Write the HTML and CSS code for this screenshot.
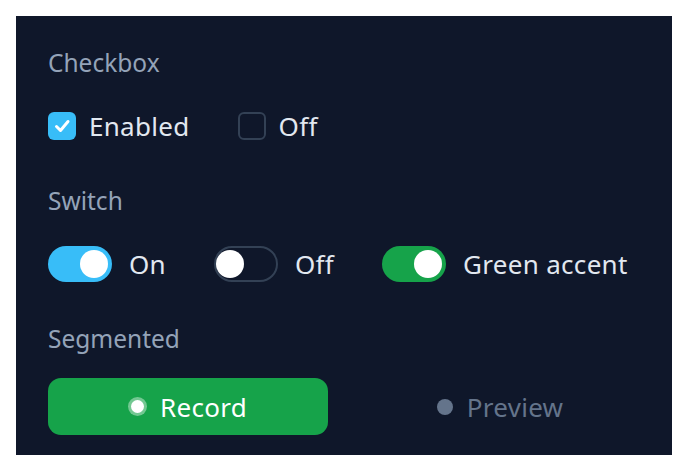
FILE: index.html
```html
<!DOCTYPE html>
<html lang="en">
<head>
    <meta charset="UTF-8">
    <meta name="viewport" content="width=device-width, initial-scale=1.0">
    <title>Controls</title>
    <link rel="stylesheet" href="styles.css">
</head>
<body>
    <div class="panel">
        <div class="section">
            <div class="section-title">Checkbox</div>
            <div class="row">
                <label class="item">
                    <span class="checkbox checked">
                        <svg viewBox="0 0 28 28" width="28" height="28">
                            <path d="M8.5 14.5 L12.5 18.5 L20 9.5" fill="none" stroke="#fff" stroke-width="3" stroke-linecap="round" stroke-linejoin="round"/>
                        </svg>
                    </span>
                    <span class="item-text">Enabled</span>
                </label>
                <label class="item">
                    <span class="checkbox"></span>
                    <span class="item-text">Off</span>
                </label>
            </div>
        </div>

        <div class="section">
            <div class="section-title">Switch</div>
            <div class="row">
                <label class="item switch-item">
                    <span class="switch on"><span class="knob"></span></span>
                    <span class="item-text">On</span>
                </label>
                <label class="item switch-item">
                    <span class="switch"><span class="knob"></span></span>
                    <span class="item-text">Off</span>
                </label>
                <label class="item switch-item">
                    <span class="switch on green"><span class="knob"></span></span>
                    <span class="item-text">Green accent</span>
                </label>
            </div>
        </div>

        <div class="section">
            <div class="section-title tight">Segmented</div>
            <div class="segmented">
                <button class="segment active"><span class="dot"></span>Record</button>
                <button class="segment"><span class="dot"></span>Preview</button>
            </div>
        </div>
    </div>
</body>
</html>
```

FILE: styles.css
```css
body {
    font-family: "Noto Sans", sans-serif;
    margin: 0;
    padding: 16px 16px 0;
    background-color: #ffffff;
}
.panel {
    background-color: #0f172a;
    padding: 32px 32px 20px;
}
.section + .section {
    margin-top: 42px;
}
.section-title {
    color: #94a3b8;
    font-size: 24.5px;
    line-height: 30px;
    margin-bottom: 30px;
}
.section-title.tight {
    margin-bottom: 24px;
}
.row {
    display: flex;
    align-items: center;
    gap: 48px;
    height: 36px;
}
.item {
    display: flex;
    align-items: center;
    gap: 13px;
}
.switch-item {
    gap: 17px;
}
.item-text {
    color: #e2e8f0;
    font-size: 26px;
    line-height: 36px;
    letter-spacing: 0.3px;
}
.checkbox {
    width: 28px;
    height: 28px;
    box-sizing: border-box;
    border: 2px solid #334155;
    border-radius: 6px;
    display: block;
}
.checkbox.checked {
    border: none;
    background-color: #38bdf8;
}
.checkbox svg {
    display: block;
}
.switch {
    width: 64px;
    height: 36px;
    box-sizing: border-box;
    border: 2px solid #334155;
    border-radius: 18px;
    display: flex;
    align-items: center;
    padding: 0;
}
.switch.on {
    border: none;
    background-color: #38bdf8;
    justify-content: flex-end;
    padding: 0 4px;
}
.switch.green {
    background-color: #16a34a;
}
.knob {
    width: 28px;
    height: 28px;
    border-radius: 50%;
    background-color: #ffffff;
    display: block;
}
.segmented {
    display: flex;
    gap: 32px;
}
.segment {
    flex: 1;
    height: 57px;
    border: none;
    border-radius: 13px;
    background: transparent;
    color: #64748b;
    font-family: "Noto Sans", sans-serif;
    font-size: 26px;
    letter-spacing: 0.3px;
    display: flex;
    align-items: center;
    justify-content: center;
    gap: 14px;
    padding: 0;
}
.segment .dot {
    width: 16px;
    height: 16px;
    border-radius: 50%;
    background-color: #64748b;
}
.segment.active {
    background-color: #16a34a;
    color: #ffffff;
}
.segment.active .dot {
    width: 13px;
    height: 13px;
    margin: 0 2px;
    background-color: #ffffff;
    box-shadow: 0 0 0 3px rgba(255, 255, 255, 0.4);
}
```
